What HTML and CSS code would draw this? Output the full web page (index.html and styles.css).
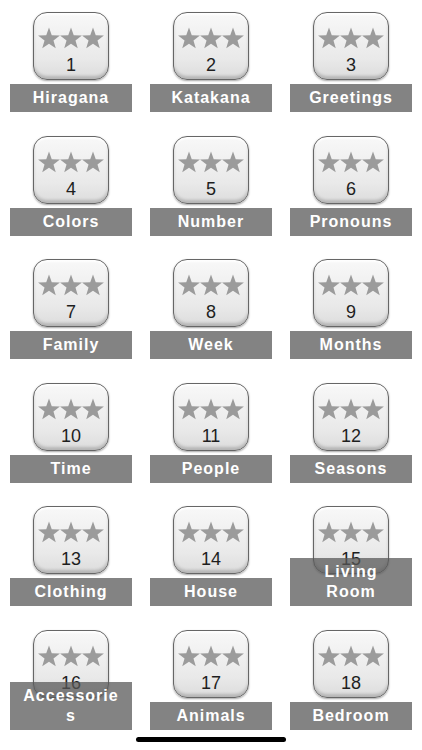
FILE: index.html
```html
<!DOCTYPE html>
<html>
<head>
<meta charset="utf-8">
<link rel="stylesheet" href="styles.css">
</head>
<body>
<svg width="0" height="0" class="defs">
  <defs>
    <polygon id="star" points="11,0.5 13.76,8.2 21.94,8.45 15.47,13.45 17.76,21.3 11,16.7 4.24,21.3 6.53,13.45 0.06,8.45 8.24,8.2"/>
    <g id="stars"><use href="#star" x="0"/><use href="#star" x="22"/><use href="#star" x="44"/></g>
  </defs>
</svg>
<main class="grid">
  <div class="cell"><div class="tile"><svg class="stars" viewBox="0 0 66 22"><use href="#stars"/></svg><span class="num">1</span></div><div class="label">Hiragana</div></div>
  <div class="cell"><div class="tile"><svg class="stars" viewBox="0 0 66 22"><use href="#stars"/></svg><span class="num">2</span></div><div class="label">Katakana</div></div>
  <div class="cell"><div class="tile"><svg class="stars" viewBox="0 0 66 22"><use href="#stars"/></svg><span class="num">3</span></div><div class="label">Greetings</div></div>
  <div class="cell"><div class="tile"><svg class="stars" viewBox="0 0 66 22"><use href="#stars"/></svg><span class="num">4</span></div><div class="label">Colors</div></div>
  <div class="cell"><div class="tile"><svg class="stars" viewBox="0 0 66 22"><use href="#stars"/></svg><span class="num">5</span></div><div class="label">Number</div></div>
  <div class="cell"><div class="tile"><svg class="stars" viewBox="0 0 66 22"><use href="#stars"/></svg><span class="num">6</span></div><div class="label">Pronouns</div></div>
  <div class="cell"><div class="tile"><svg class="stars" viewBox="0 0 66 22"><use href="#stars"/></svg><span class="num">7</span></div><div class="label">Family</div></div>
  <div class="cell"><div class="tile"><svg class="stars" viewBox="0 0 66 22"><use href="#stars"/></svg><span class="num">8</span></div><div class="label">Week</div></div>
  <div class="cell"><div class="tile"><svg class="stars" viewBox="0 0 66 22"><use href="#stars"/></svg><span class="num">9</span></div><div class="label">Months</div></div>
  <div class="cell"><div class="tile"><svg class="stars" viewBox="0 0 66 22"><use href="#stars"/></svg><span class="num">10</span></div><div class="label">Time</div></div>
  <div class="cell"><div class="tile"><svg class="stars" viewBox="0 0 66 22"><use href="#stars"/></svg><span class="num">11</span></div><div class="label">People</div></div>
  <div class="cell"><div class="tile"><svg class="stars" viewBox="0 0 66 22"><use href="#stars"/></svg><span class="num">12</span></div><div class="label">Seasons</div></div>
  <div class="cell"><div class="tile"><svg class="stars" viewBox="0 0 66 22"><use href="#stars"/></svg><span class="num">13</span></div><div class="label">Clothing</div></div>
  <div class="cell"><div class="tile"><svg class="stars" viewBox="0 0 66 22"><use href="#stars"/></svg><span class="num">14</span></div><div class="label">House</div></div>
  <div class="cell"><div class="tile"><svg class="stars" viewBox="0 0 66 22"><use href="#stars"/></svg><span class="num">15</span></div><div class="label">Living Room</div></div>
  <div class="cell"><div class="tile"><svg class="stars" viewBox="0 0 66 22"><use href="#stars"/></svg><span class="num">16</span></div><div class="label">Accessories</div></div>
  <div class="cell"><div class="tile"><svg class="stars" viewBox="0 0 66 22"><use href="#stars"/></svg><span class="num">17</span></div><div class="label">Animals</div></div>
  <div class="cell"><div class="tile"><svg class="stars" viewBox="0 0 66 22"><use href="#stars"/></svg><span class="num">18</span></div><div class="label">Bedroom</div></div>
</main>
<div class="home-indicator"></div>
</body>
</html>
```
FILE: styles.css
```css
html, body {
  margin: 0;
  padding: 0;
  background: #ffffff;
}
body {
  width: 422px;
  height: 750px;
  position: relative;
  overflow: hidden;
  font-family: "Liberation Sans", Arial, sans-serif;
}
.defs {
  position: absolute;
  width: 0;
  height: 0;
}
.grid {
  display: grid;
  grid-template-columns: repeat(3, 122px);
  grid-auto-rows: 100px;
  column-gap: 18px;
  row-gap: 23.6px;
  padding: 12px 10px 0 10px;
}
.cell {
  display: grid;
  height: 100px;
}
.tile {
  grid-area: 1 / 1;
  justify-self: center;
  align-self: start;
  width: 76px;
  height: 68px;
  box-sizing: border-box;
  border: 1.5px solid #666666;
  border-radius: 14px;
  background: linear-gradient(#f8f8f8, #e9e9e9 70%, #dcdcdc);
  box-shadow: inset 0 -3px 3px rgba(0, 0, 0, 0.18), inset 0 2px 2px rgba(255, 255, 255, 0.9), 0 1px 2px rgba(0, 0, 0, 0.35);
  display: flex;
  flex-direction: column;
  align-items: center;
  padding-top: 14px;
}
.stars {
  width: 66px;
  height: 22px;
  fill: #9b9b9b;
  display: block;
}
.num {
  margin-top: 6px;
  font-size: 18px;
  line-height: 20px;
  color: #1e1e1e;
}
.label {
  grid-area: 1 / 1;
  align-self: end;
  z-index: 1;
  background: rgba(88, 88, 88, 0.74);
  color: #ffffff;
  font-weight: bold;
  font-size: 16px;
  letter-spacing: 1px;
  line-height: 20px;
  padding: 4px 10px;
  text-align: center;
  overflow-wrap: anywhere;
}
.home-indicator {
  position: absolute;
  left: 136px;
  top: 737px;
  width: 150px;
  height: 5px;
  border-radius: 3px;
  background: #000000;
}
```
